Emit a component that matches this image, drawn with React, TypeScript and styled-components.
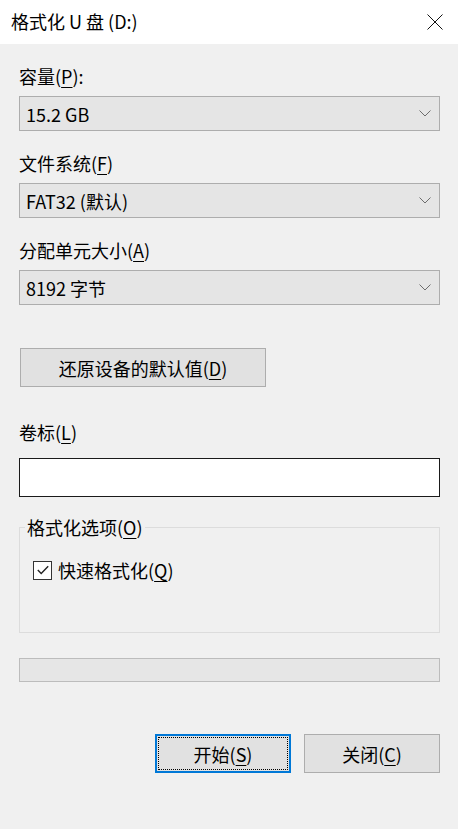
import React from 'react';
import styled, { createGlobalStyle } from 'styled-components';

const GlobalStyle = createGlobalStyle`
  html, body {
    margin: 0;
    padding: 0;
    background: #f0f0f0;
  }
  body {
    font-family: "Noto Sans CJK SC", "Noto Sans", sans-serif;
    font-size: 18px;
    color: #000;
  }
`;

const Dialog = styled.div`
  width: 458px;
  height: 829px;
  display: flex;
  flex-direction: column;
  background: #f0f0f0;
  overflow: hidden;
`;

const TitleBar = styled.div`
  height: 44px;
  flex: none;
  background: #fff;
  display: flex;
  align-items: center;
  justify-content: space-between;
  padding: 0 15px 0 11px;
`;

const TitleText = styled.span`
  font-size: 18px;
  line-height: 24px;
  margin-top: -2px;
`;

const CloseButton = styled.button`
  width: 16px;
  height: 16px;
  padding: 0;
  border: 0;
  background: none;
  display: flex;
  margin-top: -1px;
`;

const Body = styled.div`
  display: flex;
  flex-direction: column;
  padding: 20px 18px 0 19px;
`;

const Label = styled.div<{ $top?: number; $bottom?: number }>`
  line-height: 24px;
  height: 24px;
  margin-top: ${(p) => p.$top ?? 0}px;
  margin-bottom: ${(p) => p.$bottom ?? 8}px;
  white-space: nowrap;
`;

const Key = styled.u`
  text-decoration-thickness: 1px;
  text-underline-offset: 3px;
`;

const Combo = styled.div`
  height: 35px;
  box-sizing: border-box;
  border: 1px solid #adadad;
  background: #e5e5e5;
  display: flex;
  align-items: center;
  justify-content: space-between;
  padding: 0 6px 0 6px;
  line-height: 24px;
`;

const Chevron = styled.svg`
  width: 12px;
  height: 7px;
  margin-right: 2px;
`;

const PlainButton = styled.button<{ $width: number; $focused?: boolean }>`
  font: inherit;
  color: #000;
  width: ${(p) => p.$width}px;
  height: 39px;
  box-sizing: border-box;
  border: ${(p) => (p.$focused ? '2px solid #0078d7' : '1px solid #adadad')};
  background: #e1e1e1;
  padding: 0;
  position: relative;
  display: flex;
  align-items: center;
  justify-content: center;
  line-height: 24px;
  cursor: default;
`;

const FocusRect = styled.span`
  position: absolute;
  inset: 1px;
  border: 1px dotted #000;
  pointer-events: none;
`;

const RestoreRow = styled.div`
  display: flex;
  margin-top: 43px;
  padding-left: 1px;
`;

const TextInput = styled.input`
  height: 39px;
  box-sizing: border-box;
  border: 1px solid #1a1a1a;
  background: #fff;
  font: inherit;
  padding: 0 6px;
  outline: none;
`;

const Group = styled.fieldset`
  margin: 18px 0 0;
  padding: 19px 13px 0 13px;
  height: 118px;
  box-sizing: border-box;
  border: 1px solid #dcdcdc;
  min-width: 0;
`;

const Legend = styled.legend`
  padding: 0 2px;
  margin-left: -8px;
  line-height: 24px;
`;

const CheckRow = styled.label`
  display: flex;
  align-items: center;
  gap: 6px;
  line-height: 24px;
`;

const CheckBox = styled.span`
  width: 19px;
  height: 19px;
  box-sizing: border-box;
  border: 1px solid #333;
  background: #fff;
  display: flex;
  align-items: center;
  justify-content: center;
`;

const Progress = styled.div`
  height: 24px;
  box-sizing: border-box;
  border: 1px solid #bcbcbc;
  background: #e6e6e6;
  margin-top: 25px;
`;

const ButtonRow = styled.div`
  display: flex;
  justify-content: flex-end;
  gap: 13px;
  margin-top: 52px;
`;

const ComboBox = ({ value }: { value: string }) => (
  <Combo>
    <span>{value}</span>
    <Chevron viewBox="0 0 12 7">
      <path d="M0.5 0.5 L6 6 L11.5 0.5" fill="none" stroke="#6d6d6d" strokeWidth="1" />
    </Chevron>
  </Combo>
);

export default function App() {
  return (
    <Dialog>
      <GlobalStyle />
      <TitleBar>
        <TitleText>格式化 U 盘 (D:)</TitleText>
        <CloseButton aria-label="关闭">
          <svg width="16" height="16" viewBox="0 0 16 16">
            <path d="M0.5 0.5 L15.5 15.5 M15.5 0.5 L0.5 15.5" stroke="#111" strokeWidth="1" />
          </svg>
        </CloseButton>
      </TitleBar>
      <Body>
        <Label>
          容量(<Key>P</Key>):
        </Label>
        <ComboBox value="15.2 GB" />

        <Label $top={20}>
          文件系统(<Key>F</Key>)
        </Label>
        <ComboBox value="FAT32 (默认)" />

        <Label $top={20}>
          分配单元大小(<Key>A</Key>)
        </Label>
        <ComboBox value="8192 字节" />

        <RestoreRow>
          <PlainButton $width={246}>
            还原设备的默认值(<Key>D</Key>)
          </PlainButton>
        </RestoreRow>

        <Label $top={33} $bottom={14}>
          卷标(<Key>L</Key>)
        </Label>
        <TextInput />

        <Group>
          <Legend>
            格式化选项(<Key>O</Key>)
          </Legend>
          <CheckRow>
            <CheckBox>
              <svg width="12" height="10" viewBox="0 0 12 10">
                <path d="M0.8 5 L4.2 8.4 L11.2 1.2" fill="none" stroke="#222" strokeWidth="1.4" />
              </svg>
            </CheckBox>
            <span>
              快速格式化(<Key>Q</Key>)
            </span>
          </CheckRow>
        </Group>

        <Progress />

        <ButtonRow>
          <PlainButton $width={136} $focused>
            <FocusRect />
            开始(<Key>S</Key>)
          </PlainButton>
          <PlainButton $width={136}>
            关闭(<Key>C</Key>)
          </PlainButton>
        </ButtonRow>
      </Body>
    </Dialog>
  );
}
